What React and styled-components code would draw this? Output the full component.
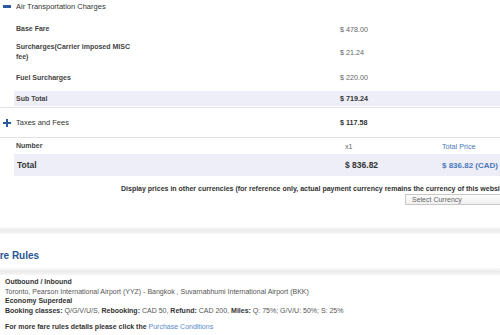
import React from "react";
import styled, { createGlobalStyle } from "styled-components";

const Global = createGlobalStyle`
  body {
    margin: 0;
    background: #fff;
    font-family: "Liberation Sans", Arial, sans-serif;
    overflow: hidden;
  }
`;

const Page = styled.div`
  width: 500px;
  height: 335px;
  overflow: hidden;
`;

const GroupHeader = styled.div`
  display: grid;
  grid-template-columns: 16px 324px 1fr;
  align-items: center;
  height: ${({ $h }) => $h}px;
  font-size: 7.5px;
  color: #333;
`;

const Toggle = styled.span`
  position: relative;
  width: 8px;
  height: 8px;
  margin-left: 3px;

  &::before,
  &::after {
    content: "";
    position: absolute;
    background: #2c5a9c;
  }
  &::before {
    left: 0;
    top: 3px;
    width: 8px;
    height: 2.5px;
  }
  &::after {
    display: ${({ $open }) => ($open ? "none" : "block")};
    left: 2.75px;
    top: 0;
    width: 2.5px;
    height: 8px;
  }
`;

const Row = styled.div`
  display: grid;
  grid-template-columns: 324px 102px 1fr;
  align-items: center;
  height: ${({ $h }) => $h}px;
  margin-left: 14px;
  margin-top: ${({ $mt }) => $mt || 0}px;
  padding-left: 2px;
  background: ${({ $shade }) => ($shade ? "#eeeef8" : "transparent")};
`;

const Label = styled.div`
  width: 128px;
  font-size: ${({ $big }) => ($big ? 8.5 : 7)}px;
  line-height: 10px;
  font-weight: bold;
  color: ${({ $big }) => ($big ? "#333" : "#444")};
  padding-left: ${({ $big }) => ($big ? 1 : 0)}px;
`;

const Value = styled.div`
  font-size: ${({ $big }) => ($big ? 8.5 : 7.2)}px;
  font-weight: ${({ $bold }) => ($bold ? "bold" : "normal")};
  color: ${({ $bold }) => ($bold ? "#333" : "#666")};
  padding-left: ${({ $indent }) => $indent || 0}px;
`;

const Price = styled.div`
  font-size: ${({ $big }) => ($big ? 8 : 7.2)}px;
  font-weight: ${({ $big }) => ($big ? "bold" : "normal")};
  color: #4a78b8;
  white-space: nowrap;
`;

const Divider = styled.div`
  height: 1px;
  background: #e2e2e6;
  margin-top: ${({ $mt }) => $mt || 0}px;
`;

const CurrencyNote = styled.div`
  margin-top: 8px;
  padding-left: 121px;
  font-size: 7px;
  line-height: 10px;
  font-weight: bold;
  color: #333;
  white-space: nowrap;
`;

const Select = styled.div`
  margin: 0 0 0 405px;
  width: 110px;
  height: 11px;
  box-sizing: border-box;
  border: 1px solid #c8c8c8;
  background: linear-gradient(#fdfdfd, #f0f0f0);
  font-size: 7px;
  line-height: 9px;
  color: #666;
  padding-left: 6px;
`;

const Band = styled.div`
  height: 7px;
  margin-top: ${({ $mt }) => $mt}px;
  background: linear-gradient(#fafafa, #ebebeb 50%, #f6f6f6);
`;

const RulesTitle = styled.h2`
  margin: 16px 0 0 -12px;
  font-size: 10px;
  line-height: 12px;
  font-weight: bold;
  color: #2b5797;
`;

const Rules = styled.div`
  padding: 2px 0 0 5px;
  font-size: 7px;
  line-height: 9.7px;
  color: #555;
  white-space: nowrap;
`;

const B = styled.b`
  color: #333;
`;

const More = styled.div`
  margin-top: 6px;
  font-weight: bold;
  color: #333;
`;

const Link = styled.a`
  font-weight: normal;
  color: #5a88c8;
  text-decoration: none;
`;

export default function App() {
  return (
    <Page>
      <Global />
      <GroupHeader $h={12}>
        <Toggle $open />
        <span>Air Transportation Charges</span>
      </GroupHeader>
      <Row $h={22} $mt={6}>
        <Label>Base Fare</Label>
        <Value>$ 478.00</Value>
      </Row>
      <Row $h={24}>
        <Label>Surcharges(Carrier imposed MISC fee)</Label>
        <Value>$ 21.24</Value>
      </Row>
      <Row $h={27}>
        <Label>Fuel Surcharges</Label>
        <Value>$ 220.00</Value>
      </Row>
      <Row $h={15} $shade>
        <Label>Sub Total</Label>
        <Value $bold>$ 719.24</Value>
      </Row>
      <Divider $mt={1} />
      <GroupHeader $h={29}>
        <Toggle />
        <span>Taxes and Fees</span>
        <Value $bold>$ 117.58</Value>
      </GroupHeader>
      <Divider />
      <Row $h={16}>
        <Label>Number</Label>
        <Value $indent={5}>x1</Value>
        <Price>Total Price</Price>
      </Row>
      <Row $h={22} $shade>
        <Label $big>Total</Label>
        <Value $bold $big $indent={5}>$ 836.82</Value>
        <Price $big>$ 836.82 (CAD)</Price>
      </Row>
      <CurrencyNote>
        Display prices in other currencies (for reference only, actual payment currency remains the currency of this website)
      </CurrencyNote>
      <Select>Select Currency</Select>
      <Band $mt={22} />
      <RulesTitle>Fare Rules</RulesTitle>
      <Band $mt={6} />
      <Rules>
        <B>Outbound / Inbound</B>
        <div>Toronto, Pearson International Airport (YYZ) - Bangkok , Suvarnabhumi International Airport (BKK)</div>
        <B>Economy Superdeal</B>
        <div>
          <B>Booking classes:</B> Q/G/V/U/S, <B>Rebooking:</B> CAD 50, <B>Refund:</B> CAD 200, <B>Miles:</B> Q: 75%; G/V/U: 50%; S: 25%
        </div>
        <More>
          For more fare rules details please click the <Link href="#">Purchase Conditions</Link>
        </More>
      </Rules>
    </Page>
  );
}
